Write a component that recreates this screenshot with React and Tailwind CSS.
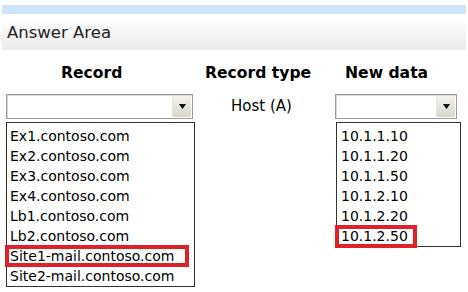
import React from 'react';

const records = [
  'Ex1.contoso.com',
  'Ex2.contoso.com',
  'Ex3.contoso.com',
  'Ex4.contoso.com',
  'Lb1.contoso.com',
  'Lb2.contoso.com',
  'Site1-mail.contoso.com',
  'Site2-mail.contoso.com',
];

const addresses = ['10.1.1.10', '10.1.1.20', '10.1.1.50', '10.1.2.10', '10.1.2.20', '10.1.2.50'];

const font = { fontFamily: '"DejaVu Sans", Verdana, sans-serif' };

const Dropdown = ({ width }) => (
  <div className={`${width} h-[25px] flex border border-[#9c9c9c] bg-white shadow-[inset_1px_1px_0_#d8d8d8]`}>
    <div className="flex-1" />
    <div className="w-[19px] my-[1px] mr-[1px] flex items-center justify-center bg-gradient-to-b from-[#f4f3ec] to-[#d9d7cb] border-l border-[#e8e6dd]">
      <svg width="7" height="5" viewBox="0 0 7 5">
        <polygon points="0,0 7,0 3.5,5" fill="#000" />
      </svg>
    </div>
  </div>
);

export default function App() {
  return (
    <div className="w-[468px] h-[292px] bg-white pt-[5px] text-black overflow-hidden" style={font}>
      <div className="mx-[2px] h-[9px] bg-[#cfe5fa]" />
      <div className="mx-[2px] mt-[3px] h-[33px] flex items-center pl-[5px] bg-gradient-to-b from-white to-[#ebebeb] text-[16.5px] text-[#222]">
        Answer Area
      </div>

      <div className="flex mt-[12px]">
        <div className="ml-[6px] w-[189px] flex flex-col">
          <div className="h-[22px] pl-[55px] font-bold text-[15.6px] leading-[22px]">Record</div>
          <div className="mt-[10px]">
            <Dropdown width="w-[187px]" />
          </div>
          <div className="mt-[3px] h-[165px] border border-[#333] pt-[3px] text-[14px]">
            {records.map((r) =>
              r.startsWith('Site1') ? (
                <div key={r} className="-ml-[2px] -my-[1px] w-[184px] h-[22px] border-[4px] border-[#e0212b] pl-[1px] leading-[14px]">
                  {r}
                </div>
              ) : (
                <div key={r} className="h-[20px] pl-[3px] leading-[20px]">
                  {r}
                </div>
              )
            )}
          </div>
        </div>

        <div className="w-[140px] flex flex-col">
          <div className="h-[22px] pl-[10px] font-bold text-[15.6px] leading-[22px]">Record type</div>
          <div className="mt-[10px] h-[25px] pl-[36px] flex items-center text-[15px]">Host (A)</div>
        </div>

        <div className="flex flex-col">
          <div className="h-[22px] pl-[10px] font-bold text-[15.6px] leading-[22px]">New data</div>
          <div className="mt-[10px]">
            <Dropdown width="w-[122px]" />
          </div>
          <div className="ml-[1px] mt-[3px] w-[125px] h-[125px] border border-[#333] pt-[3px] text-[14px]">
            {addresses.map((a) =>
              a === '10.1.2.50' ? (
                <div key={a} className="-ml-[2px] -mt-[1px] w-[82px] h-[23px] border-[4px] border-[#e0212b] pl-[2px] leading-[15px]">
                  {a}
                </div>
              ) : (
                <div key={a} className="h-[20px] pl-[4px] leading-[20px]">
                  {a}
                </div>
              )
            )}
          </div>
        </div>
      </div>
    </div>
  );
}
